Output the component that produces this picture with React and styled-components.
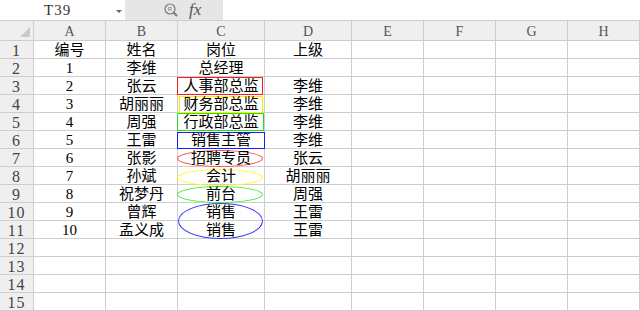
import React from 'react';
import styled, { createGlobalStyle } from 'styled-components';

const GlobalStyle = createGlobalStyle`
  html, body {
    margin: 0;
    padding: 0;
    background: #fff;
  }
  body {
    font-family: "Liberation Serif", "Noto Sans CJK SC", serif;
    overflow: hidden;
  }
`;

const LINE = '#cdcdcd';
const COLUMNS = ['A', 'B', 'C', 'D', 'E', 'F', 'G', 'H'];

const ROWS = [
    ['编号', '姓名', '岗位', '上级'],
    ['1', '李维', '总经理', ''],
    ['2', '张云', '人事部总监', '李维'],
    ['3', '胡丽丽', '财务部总监', '李维'],
    ['4', '周强', '行政部总监', '李维'],
    ['5', '王雷', '销售主管', '李维'],
    ['6', '张影', '招聘专员', '张云'],
    ['7', '孙斌', '会计', '胡丽丽'],
    ['8', '祝梦丹', '前台', '周强'],
    ['9', '曾辉', '销售', '王雷'],
    ['10', '孟义成', '销售', '王雷'],
];

// shapes drawn over column C, keyed by row number
const SHAPES = {
    3: { kind: 'rect', color: '#ff1a1a', l: -1, t: 0, w: 86, h: 18 },
    4: { kind: 'rect', color: '#ffee00', l: 1, t: 1, w: 84, h: 17 },
    5: { kind: 'rect', color: '#1ee01e', l: -1, t: 0, w: 87, h: 18 },
    6: { kind: 'rect', color: '#1a1aff', l: -1, t: 1, w: 88, h: 17 },
    7: { kind: 'ellipse', color: '#ff4a4a', l: -1, t: 1, w: 86, h: 17 },
    8: { kind: 'ellipse', color: '#ffff1a', l: -1, t: 2, w: 86, h: 17 },
    9: { kind: 'ellipse', color: '#3cf03c', l: -1, t: 1, w: 86, h: 17 },
    10: { kind: 'ellipse', color: '#3a3aff', l: 0, t: 0, w: 85, h: 36 },
};

const Toolbar = styled.div`
    display: flex;
    height: 20px;
    align-items: stretch;
`;

const NameBox = styled.div`
    width: 125px;
    display: flex;
    align-items: center;
    position: relative;
    box-sizing: border-box;
    padding-left: 44px;
    font-size: 15px;
    letter-spacing: 1px;
    color: #333;
`;

const Arrow = styled.span`
    position: absolute;
    left: 116px;
    top: 10px;
    width: 0;
    height: 0;
    border-left: 3px solid transparent;
    border-right: 3px solid transparent;
    border-top: 3px solid #666;
`;

const FormulaTools = styled.div`
    width: 98px;
    background: #e6e6e6;
    display: flex;
    align-items: center;
    padding-left: 39px;
    box-sizing: border-box;
    gap: 11px;
`;

const Fx = styled.span`
    font-family: "Liberation Serif", serif;
    font-style: italic;
    font-size: 17px;
    color: #555;
    line-height: 1;
    margin-top: -2px;
`;

const Sheet = styled.div`
    display: grid;
    grid-template-columns: 34px 72px 72px 87px 87px 72px 72px 72px 72px;
    grid-template-rows: 20px repeat(15, 18px);
    border-top: 1px solid ${LINE};
`;

const Cell = styled.div`
    position: relative;
    box-sizing: border-box;
    border-right: 1px solid ${LINE};
    border-bottom: 1px solid ${LINE};
    display: flex;
    align-items: center;
    justify-content: center;
    padding-top: 2px;
    font-size: 15px;
    line-height: 17px;
    color: #000;
    white-space: nowrap;
`;

const HeadCell = styled(Cell)`
    background: #efefef;
    color: #555;
    font-size: 14px;
    padding-top: 1px;
`;

const Corner = styled(HeadCell)`
    &::after {
        content: '';
        position: absolute;
        right: 3px;
        bottom: 3px;
        width: 0;
        height: 0;
        border-left: 10px solid transparent;
        border-bottom: 10px solid #c9c9c9;
    }
`;

const RowNum = styled(HeadCell)`
    font-size: 16px;
    color: #444;
    letter-spacing: 1px;
    padding-top: 2px;
`;

const Shape = styled.div`
    position: absolute;
    z-index: 1;
    box-sizing: border-box;
    left: ${p => p.$l}px;
    top: ${p => p.$t}px;
    width: ${p => p.$w}px;
    height: ${p => p.$h}px;
    border: 1.5px solid ${p => p.$color};
    border-radius: ${p => (p.$kind === 'ellipse' ? '50%' : '0')};
    pointer-events: none;
`;

const CellText = styled.span`
    position: relative;
    z-index: 2;
`;

function Magnifier() {
    return (
        <svg width="14" height="14" viewBox="0 0 14 14">
            <circle cx="6" cy="6" r="5" fill="none" stroke="#777" strokeWidth="1.2" />
            <line x1="9.5" y1="9.5" x2="13" y2="13" stroke="#777" strokeWidth="2" />
            <text x="6" y="8.2" fontSize="6" textAnchor="middle" fill="#777" fontFamily="Liberation Sans, sans-serif">R</text>
        </svg>
    );
}

export default function App() {
    const rows = Array.from({ length: 15 }, (_, i) => i + 1);
    return (
        <>
            <GlobalStyle />
            <Toolbar>
                <NameBox>
                    T39
                    <Arrow />
                </NameBox>
                <FormulaTools>
                    <Magnifier />
                    <Fx>fx</Fx>
                </FormulaTools>
            </Toolbar>
            <Sheet>
                <Corner />
                {COLUMNS.map(c => (
                    <HeadCell key={c}>{c}</HeadCell>
                ))}
                {rows.map(r => {
                    const data = ROWS[r - 1] || [];
                    return (
                        <React.Fragment key={r}>
                            <RowNum>{r}</RowNum>
                            {COLUMNS.map((c, ci) => {
                                const shape = ci === 2 ? SHAPES[r] : null;
                                return (
                                    <Cell key={c}>
                                        {shape && (
                                            <Shape
                                                $kind={shape.kind}
                                                $color={shape.color}
                                                $l={shape.l}
                                                $t={shape.t}
                                                $w={shape.w}
                                                $h={shape.h}
                                            />
                                        )}
                                        {data[ci] && <CellText>{data[ci]}</CellText>}
                                    </Cell>
                                );
                            })}
                        </React.Fragment>
                    );
                })}
            </Sheet>
        </>
    );
}
